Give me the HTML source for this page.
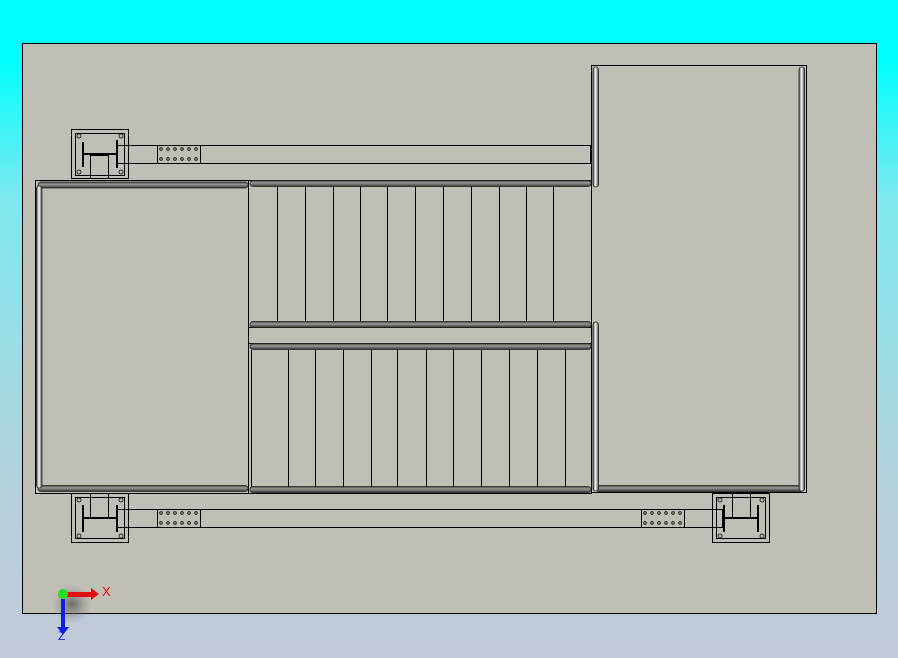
<!DOCTYPE html>
<html><head><style>
html,body{margin:0;padding:0;width:898px;height:658px;overflow:hidden;
background:linear-gradient(#00ffff 0px,#00ffff 60px,#7fe8ee 200px,#b4d2dc 480px,#c2c8d8 658px);}
svg{position:absolute;left:0;top:0}
</style></head><body>
<svg width="898" height="658" viewBox="0 0 898 658" xmlns="http://www.w3.org/2000/svg">
<defs>
<linearGradient id="rh" x1="0" y1="0" x2="0" y2="1"><stop offset="0" stop-color="#444"/><stop offset="0.4" stop-color="#999"/><stop offset="1" stop-color="#333"/></linearGradient>
<linearGradient id="rv" x1="0" y1="0" x2="1" y2="0"><stop offset="0" stop-color="#444"/><stop offset="0.45" stop-color="#fff"/><stop offset="1" stop-color="#444"/></linearGradient>
<radialGradient id="sh"><stop offset="0" stop-color="#555" stop-opacity=".8"/><stop offset="1" stop-color="#888" stop-opacity="0"/></radialGradient>
</defs>
<rect x="22.5" y="43.5" width="854" height="570" fill="#c0bfb6" stroke="#000"/>
<g fill="none" stroke="#000" stroke-width="1">
<rect x="591.5" y="65.5" width="215" height="427"/>
<rect x="35.5" y="180.5" width="213" height="313"/>
<rect x="248.5" y="180.5" width="343" height="147"/>
<rect x="248.5" y="343.5" width="343" height="150"/>
<line x1="251.5" y1="350" x2="251.5" y2="490"/>
<line x1="248" y1="327.5" x2="591" y2="327.5"/>
<line x1="248" y1="343.5" x2="591" y2="343.5"/>
<path d="M277.5 187V322M305.5 187V322M333.5 187V322M360.5 187V322M387.5 187V322M415.5 187V322M443.5 187V322M471.5 187V322M499.5 187V322M526.5 187V322M553.5 187V322"/>
<path d="M288.5 350V488M315.5 350V488M343.5 350V488M371.5 350V488M397.5 350V488M426.5 350V488M453.5 350V488M481.5 350V488M509.5 350V488M537.5 350V488M565.5 350V488"/>
<rect x="117.5" y="145.5" width="473" height="18"/>
<rect x="157.5" y="145.5" width="43" height="18"/>
<rect x="117.5" y="509.5" width="605" height="18"/>
<rect x="157.5" y="509.5" width="43" height="18"/>
<rect x="641.5" y="509.5" width="43" height="18"/>
<rect x="71.5" y="129.5" width="57" height="49"/>
<rect x="75.5" y="133.5" width="49" height="42"/>
<rect x="90.5" y="155.5" width="18" height="23"/>
<rect x="71.5" y="493.5" width="57" height="49"/>
<rect x="75.5" y="497.5" width="49" height="41"/>
<rect x="90.5" y="493.5" width="18" height="25"/>
<rect x="712.5" y="493.5" width="57" height="49"/>
<rect x="716.5" y="497.5" width="49" height="41"/>
<rect x="732.5" y="493.5" width="18" height="25"/>
</g>
<g stroke="#000" stroke-width="2" fill="none">
<path d="M83 142V167M84 154H116M117 140V168"/>
<path d="M83 505V532M84 518H116M117 505V532"/>
<path d="M758 505V532M725 518H757M724 505V532"/>
</g>
<g fill="none" stroke="#000" stroke-width="0.8">
<circle cx="79" cy="136" r="2"/><circle cx="121" cy="136" r="2"/><circle cx="79" cy="172" r="2"/><circle cx="121" cy="172" r="2"/>
<circle cx="79" cy="500" r="2"/><circle cx="121" cy="500" r="2"/><circle cx="79" cy="536" r="2"/><circle cx="121" cy="536" r="2"/>
<circle cx="720" cy="500" r="2"/><circle cx="762" cy="500" r="2"/><circle cx="720" cy="536" r="2"/><circle cx="762" cy="536" r="2"/>
<g id="dots"><circle cx="161" cy="149" r="1.3"/><circle cx="168" cy="149" r="1.3"/><circle cx="175" cy="149" r="1.3"/><circle cx="182" cy="149" r="1.3"/><circle cx="189" cy="149" r="1.3"/><circle cx="196" cy="149" r="1.3"/>
<circle cx="161" cy="159" r="1.3"/><circle cx="168" cy="159" r="1.3"/><circle cx="175" cy="159" r="1.3"/><circle cx="182" cy="159" r="1.3"/><circle cx="189" cy="159" r="1.3"/><circle cx="196" cy="159" r="1.3"/></g>
<use href="#dots" y="364"/><use href="#dots" x="484" y="364"/>
</g>
<g fill="url(#rh)" stroke="#222" stroke-width="0.8">
<rect x="38" y="182" width="210" height="6" rx="3"/>
<rect x="38" y="485.5" width="210" height="6" rx="3"/>
<rect x="250" y="180.5" width="341" height="6" rx="3"/>
<rect x="250" y="321.5" width="341" height="6" rx="3"/>
<rect x="250" y="343.5" width="341" height="6" rx="3"/>
<rect x="250" y="486.5" width="341" height="6" rx="3"/>
<rect x="596" y="485.5" width="208" height="6" rx="3"/>
</g>
<g fill="url(#rv)" stroke="#222" stroke-width="0.8">
<rect x="36.5" y="186" width="5.5" height="302" rx="2.5"/>
<rect x="593" y="67" width="5.5" height="120" rx="2.5"/>
<rect x="593" y="322" width="5.5" height="169" rx="2.5"/>
<rect x="799" y="67" width="5.5" height="424" rx="2.5"/>
</g>
<circle cx="72" cy="604" r="20" fill="url(#sh)"/>
<rect x="61" y="599" width="4" height="28" fill="#1020e0"/>
<polygon points="57,627 69,627 63,635" fill="#1020e0"/>
<rect x="63" y="592" width="28" height="5" fill="#e01010"/>
<polygon points="91,588 91,600 99,594" fill="#e01010"/>
<circle cx="63" cy="594" r="5" fill="#20e020"/>
<text x="102" y="596" font-family="Liberation Sans, sans-serif" font-size="13" fill="#e01010">X</text>
<text x="58" y="640" font-family="Liberation Sans, sans-serif" font-size="12" fill="#1020e0">Z</text>
</svg>
</body></html>
